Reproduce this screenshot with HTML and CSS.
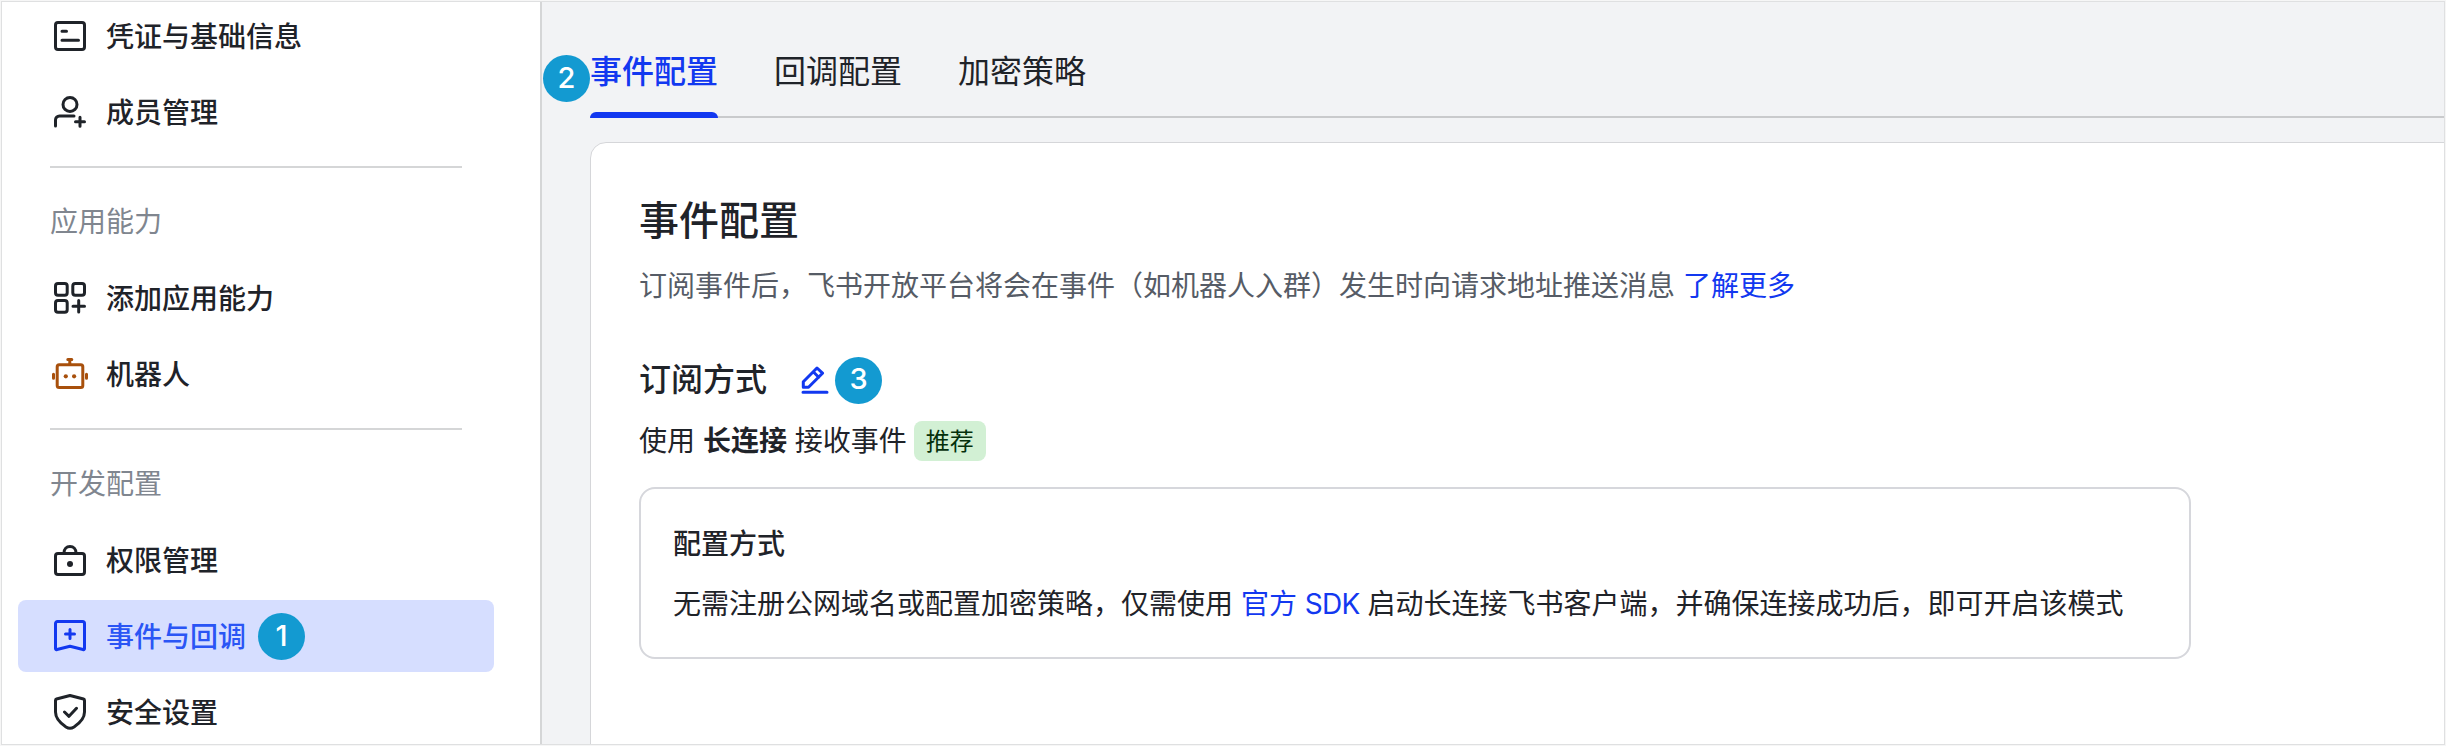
FILE: index.html
```html
<!DOCTYPE html>
<html lang="zh-CN">
<head>
<meta charset="utf-8">
<title>事件与回调</title>
<link rel="stylesheet" href="styles.css">
</head>
<body>
<div class="frame">
  <nav class="sidebar">
    <a class="item"><svg class="icon" viewBox="0 0 36 36"><rect x="3.5" y="4.5" width="29" height="27" rx="2.5"/><path d="M10 13.3h4.500M10 22.3h16.500"/></svg><span class="label">凭证与基础信息</span></a>
    <a class="item"><svg class="icon" viewBox="0 0 36 36"><circle cx="18" cy="10.4" r="7"/><path d="M3.5 32v-6a4 4 0 0 1 4-4H22M23.500 27.700h9M28 23.200v9"/></svg><span class="label">成员管理</span></a>
    <hr class="divider">
    <h4 class="group">应用能力</h4>
    <a class="item"><svg class="icon" viewBox="0 0 36 36"><rect x="3.500" y="3.500" width="11.700" height="11.700" rx="2.500"/><rect x="20.800" y="3.500" width="11.700" height="11.700" rx="2.500"/><rect x="3.500" y="20.500" width="11.700" height="11.700" rx="2.500"/><path d="M21 26.300h11.500M26.700 20.600v11.500"/></svg><span class="label">添加应用能力</span></a>
    <a class="item"><svg class="icon robot" viewBox="0 0 36 36"><rect x="5.200" y="8.700" width="25.600" height="22.800" rx="2"/><path d="M17.800 8V4M15.800 3.600h4M1.500 18.200v4M34.500 18.200v4"/><circle class="dot" cx="13.800" cy="20.300" r="2.100"/><circle class="dot" cx="22.100" cy="20.300" r="2.100"/></svg><span class="label">机器人</span></a>
    <hr class="divider">
    <h4 class="group">开发配置</h4>
    <a class="item"><svg class="icon" viewBox="0 0 36 36"><rect x="3.500" y="11.500" width="29" height="21" rx="2.500"/><path d="M12 11c0-4 2.500-6.500 6-6.500s6 2.500 6 6.500"/><circle class="dot" cx="18" cy="22" r="3"/></svg><span class="label">权限管理</span></a>
    <a class="item active"><svg class="icon" viewBox="0 0 36 36"><path d="M5.500 3.500h25a2 2 0 0 1 2 2V30.500q0 1.500-1.500 1L18 28.200 5 31.500q-1.500.5-1.500-1V5.500a2 2 0 0 1 2-2zM13.500 16h9M18 11.500v9"/></svg><span class="label">事件与回调</span><span class="badge">1</span></a>
    <a class="item"><svg class="icon" viewBox="0 0 36 36"><path d="M18 1.500 31.500 5q1 .3 1 1.500v11.500c0 6-4.500 11-10.500 15q-4 2.500-8 0C8 29 3.500 24 3.500 18V6.500q0-1.200 1-1.500zM12.500 18l4.500 4.300 7.500-8"/></svg><span class="label">安全设置</span></a>
  </nav>
  <main class="main">
    <div class="tabs">
      <a class="tab current">事件配置<span class="badge over">2</span></a>
      <a class="tab">回调配置</a>
      <a class="tab">加密策略</a>
    </div>
    <section class="card">
      <h1 class="title">事件配置</h1>
      <p class="desc">订阅事件后，飞书开放平台将会在事件（如机器人入群）发生时向请求地址推送消息 <a class="link">了解更多</a></p>
      <div class="mode">
        <h2 class="subtitle">订阅方式</h2>
        <svg class="pencil" viewBox="0 0 28 28"><path d="M2.300 21.200v-5.400L16 2l5.500 5.200L7.500 21.200zM12.500 6l5.200 5.200M2 26.300h24"/></svg>
        <span class="badge">3</span>
      </div>
      <div class="using"><span>使用 <b>长连接</b> 接收事件</span><span class="tag">推荐</span></div>
      <div class="box">
        <h3 class="boxtitle">配置方式</h3>
        <p class="boxtext">无需注册公网域名或配置加密策略，仅需使用 <a class="link">官方 <span class="latin">SDK</span></a> 启动长连接飞书客户端，并确保连接成功后，即可开启该模式</p>
      </div>
    </section>
  </main>
</div>
</body>
</html>
```
FILE: styles.css
```css
* { box-sizing: border-box; }
body {
  margin: 0;
  width: 2446px;
  height: 746px;
  padding: 1px;
  overflow: hidden;
  background: #f6f6f6;
  color: #1f2329;
  font-family: Inter, "Noto Sans CJK SC", sans-serif;
  font-size: 28px;
}
h1, h2, h3, h4, p { margin: 0; font-weight: 500; }
.frame {
  display: flex;
  width: 2444px;
  height: 744px;
  border: 1px solid #dfe0e1;
  overflow: hidden;
}
.sidebar {
  display: flex;
  flex-direction: column;
  width: 540px;
  flex: none;
  background: #fff;
  border-right: 2px solid #d5d6d7;
  padding-left: 16px;
}
.sidebar > * { flex: none; }
.item {
  display: flex;
  align-items: center;
  width: 476px;
  height: 72px;
  margin-bottom: 4px;
  padding-left: 34px;
  border-radius: 8px;
  font-weight: 500;
  white-space: nowrap;
}
.item:first-child { margin-top: -2px; }
.item.active { background: #d6deff; color: #2a55f5; }
.label { padding-bottom: 3px; }
.icon {
  width: 36px;
  height: 36px;
  margin-right: 18px;
  fill: none;
  stroke: #1f2329;
  stroke-width: 3;
  stroke-linecap: round;
  stroke-linejoin: round;
}
.active .icon { stroke: #1238f0; }
.robot { stroke: #a8500c; }
.icon .dot { fill: #1f2329; stroke: none; }
.robot .dot { fill: #a8500c; }
.divider {
  width: 412px;
  height: 2px;
  margin: 14px 0 0 32px;
  border: 0;
  background: #d5d6d7;
}
.group {
  height: 94px;
  padding: 32px 0 0 32px;
  line-height: 44px;
  font-size: 28px;
  font-weight: 400;
  color: #80868f;
}
.badge {
  display: flex;
  align-items: center;
  justify-content: center;
  width: 47px;
  height: 47px;
  border-radius: 50%;
  background: #139ad1;
  color: #fff;
  font-size: 29px;
  font-weight: 500;
  line-height: 1;
  padding-bottom: 3px;
}
.item .badge { margin: 1px 0 0 12px; }
.main {
  flex: 1;
  min-width: 0;
  background: #f2f3f5;
  padding-left: 48px;
}
.tabs {
  display: flex;
  gap: 56px;
  height: 116px;
  border-bottom: 2px solid #c9cacc;
}
.tab {
  position: relative;
  height: 116px;
  padding-top: 46px;
  line-height: 48px;
  font-size: 32px;
}
.tab.current { color: #1238f0; font-weight: 500; }
.tab.current::after {
  content: "";
  position: absolute;
  left: 0;
  right: 0;
  bottom: 0;
  height: 6px;
  border-radius: 6px 6px 0 0;
  background: #1238f0;
}
.badge.over { position: absolute; left: -47px; top: 53px; }
.card {
  height: 640px;
  margin: 24px -20px 0 0;
  padding: 48px 48px;
  border: 1px solid #d5d6d9;
  border-radius: 16px;
  background: #fff;
}
.title { font-size: 40px; line-height: 60px; }
.desc { margin-top: 13px; line-height: 44px; color: #565c66; white-space: nowrap; }
.link { color: #1238f0; }
.desc, .boxtext { font-weight: 400; }
.mode { display: flex; align-items: center; margin-top: 48px; height: 48px; }
.subtitle { font-size: 32px; line-height: 48px; }
.pencil {
  width: 28px;
  height: 28px;
  margin: 0 6px 0 34px;
  fill: none;
  stroke: #1238f0;
  stroke-width: 3;
  stroke-linejoin: round;
  stroke-linecap: round;
}
.using { display: flex; align-items: center; gap: 7px; height: 40px; margin-top: 17px; line-height: 40px; }
.tag {
  height: 40px;
  padding: 0 12px;
  border-radius: 8px;
  background: #d2f0d4;
  color: #05300c;
  font-size: 24px;
  line-height: 41px;
  font-weight: 400;
}
.box {
  width: 1552px;
  height: 172px;
  margin-top: 26px;
  padding: 33px 32px;
  border: 2px solid #d6d7dc;
  border-radius: 16px;
}
.boxtitle { font-size: 28px; line-height: 44px; }
.boxtext { margin-top: 16px; line-height: 44px; white-space: nowrap; }
.latin { letter-spacing: -0.7px; }
```
